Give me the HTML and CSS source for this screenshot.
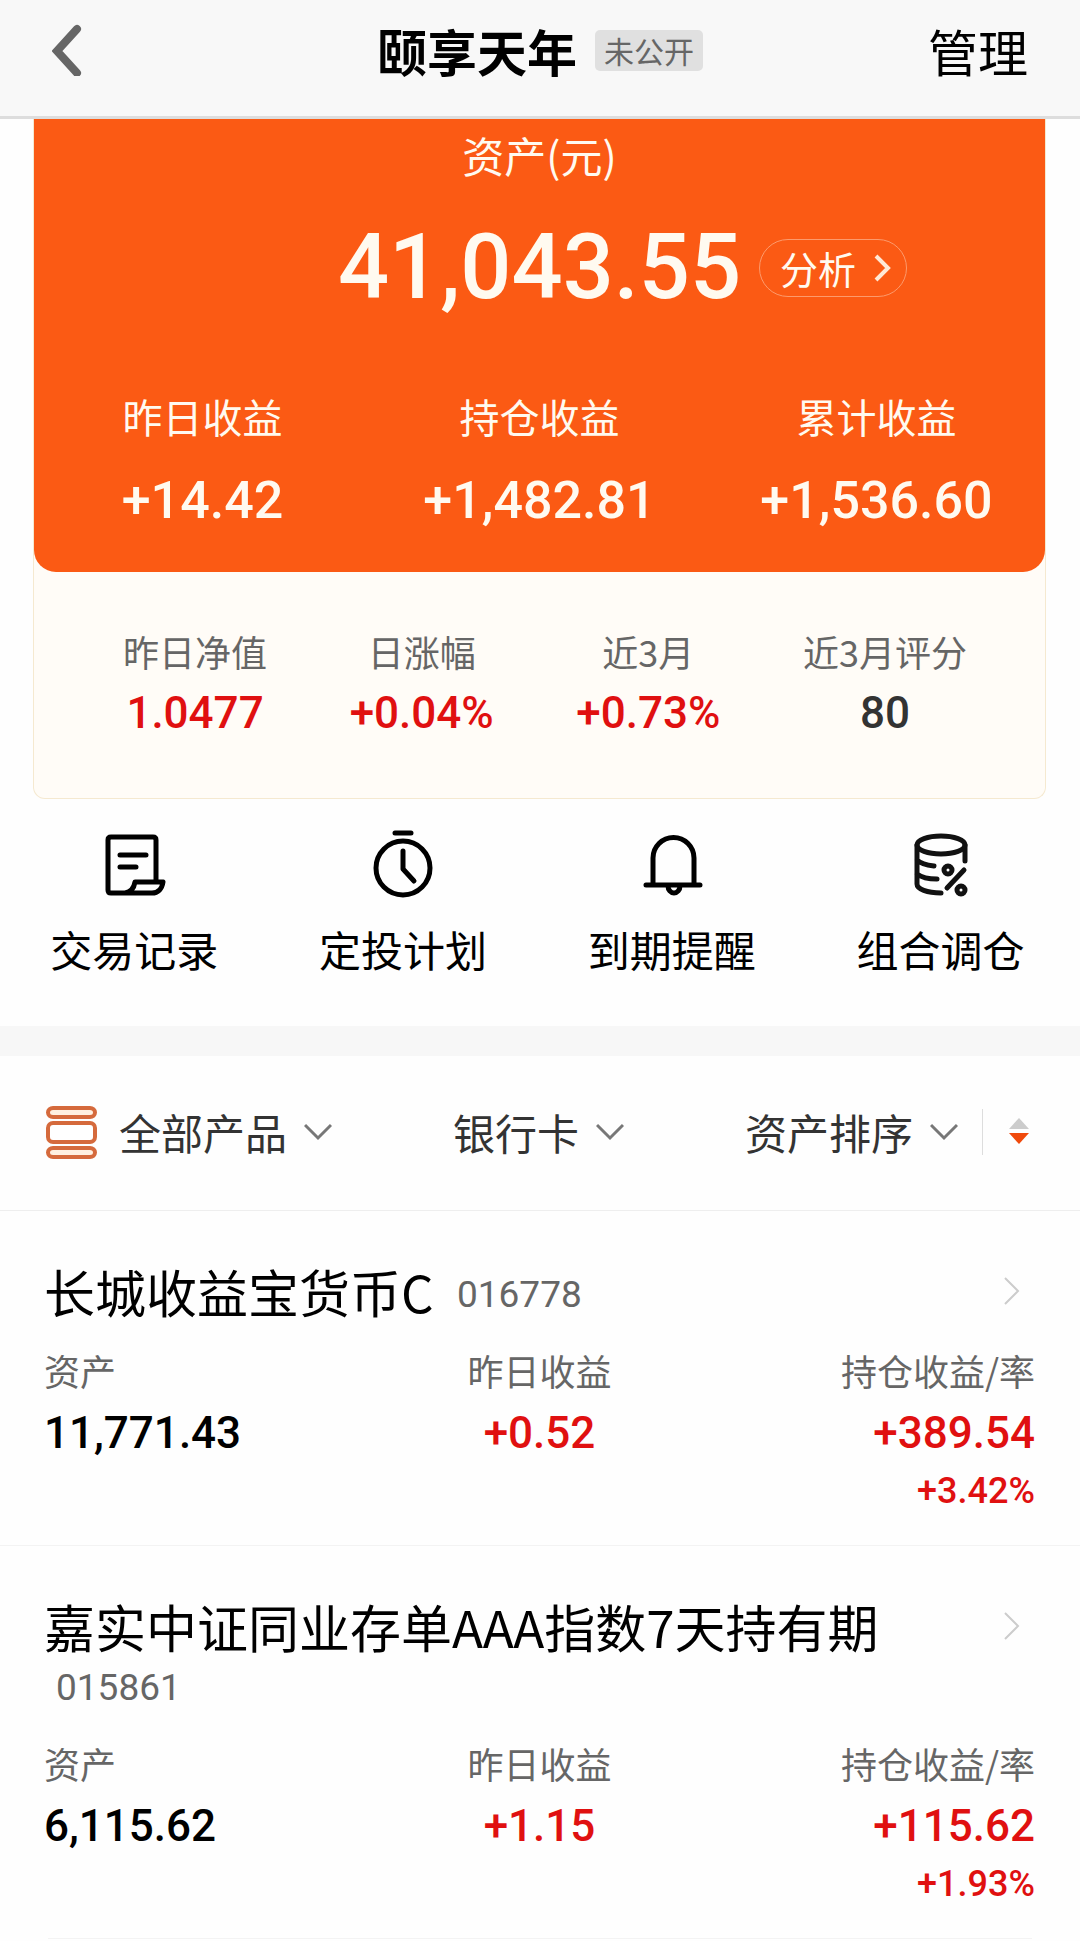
FILE: index.html
```html
<!DOCTYPE html>
<html lang="zh-CN">
<head>
<meta charset="utf-8">
<meta name="viewport" content="width=device-width, initial-scale=1">
<title>颐享天年</title>
<link rel="stylesheet" href="styles.css">
</head>
<body>
<header class="topbar">
  <button class="back" type="button" aria-label="返回">
    <svg width="30" height="52" viewBox="0 0 30 52"><path d="M25 5 5 27l20 22" fill="none" stroke="#666" stroke-width="8" stroke-linecap="round"/></svg>
  </button>
  <div class="heading"><h1>颐享天年</h1><span class="badge">未公开</span></div>
  <button class="manage" type="button">管理</button>
</header>

<main>
  <section class="card">
    <div class="assets">
      <p class="assets-label">资产(元)</p>
      <div class="total-row">
        <strong class="total">41,043.55</strong>
        <a class="analyse" href="#analysis">分析
          <svg width="18" height="28" viewBox="0 0 18 28"><path d="M2 2l12 12L2 26" fill="none" stroke="#ffe9d6" stroke-width="4"/></svg>
        </a>
      </div>
      <dl class="gains">
        <div><dt>昨日收益</dt><dd>+14.42</dd></div>
        <div><dt>持仓收益</dt><dd>+1,482.81</dd></div>
        <div><dt>累计收益</dt><dd>+1,536.60</dd></div>
      </dl>
    </div>
    <dl class="stats">
      <div><dt>昨日净值</dt><dd class="up">1.0477</dd></div>
      <div><dt>日涨幅</dt><dd class="up">+0.04%</dd></div>
      <div><dt>近3月</dt><dd class="up">+0.73%</dd></div>
      <div><dt>近3月评分</dt><dd>80</dd></div>
    </dl>
  </section>

  <nav class="actions">
    <a href="#records">
      <svg width="72" height="72" viewBox="0 0 72 72" fill="none" stroke="#000" stroke-width="5" stroke-linecap="round" stroke-linejoin="round"><path d="M58 55V13q0-3-3-3H13q-3 0-3 3v50q0 3 3 3h41c6 0 10-4 11-11H37c-1 6-4 10-10 11M22 28h26M22 40h16"/></svg>
      交易记录</a>
    <a href="#plan">
      <svg width="72" height="72" viewBox="0 0 72 72" fill="none" stroke="#000" stroke-width="5" stroke-linecap="round" stroke-linejoin="round"><circle cx="36" cy="41" r="27"/><path d="M28 6h16M36 24v18l11 12"/></svg>
      定投计划</a>
    <a href="#reminder">
      <svg width="72" height="72" viewBox="0 0 72 72" fill="none" stroke="#000" stroke-width="5" stroke-linecap="round" stroke-linejoin="round"><path d="M17 58V31a20 20 0 0 1 41 0v27M10 58h54M32 59a6 7 0 0 0 12 0"/></svg>
      到期提醒</a>
    <a href="#rebalance">
      <svg width="72" height="72" viewBox="0 0 72 72" fill="none" stroke="#111" stroke-width="5" stroke-linecap="round"><ellipse cx="36" cy="18" rx="24" ry="9"/><path d="M12 18v39c0 5 10 9 24 9M60 18v16M12 33c3 3 9 5 17 6M12 47c4 3 11 5 20 5M59 43 42 61"/><circle cx="43" cy="43" r="4"/><circle cx="56" cy="63" r="4"/></svg>
      组合调仓</a>
  </nav>

  <form class="filters">
    <svg class="list-icon" width="52" height="54" viewBox="0 0 52 54" fill="#fff0e0" stroke="#d56a3c" stroke-width="4"><rect x="3" y="3" width="47" height="9" rx="5"/><rect x="3" y="18" width="47" height="19" rx="5" fill="#fff"/><rect x="3" y="43" width="47" height="9" rx="5"/></svg>
    <label class="picker product"><select aria-label="产品"><option>全部产品</option></select><svg width="28" height="18" viewBox="0 0 28 18"><path d="M1 2l13 13L27 2" fill="none" stroke="#777" stroke-width="3"/></svg></label>
    <label class="picker bank"><select aria-label="付款方式"><option>银行卡</option></select><svg width="28" height="18" viewBox="0 0 28 18"><path d="M1 2l13 13L27 2" fill="none" stroke="#777" stroke-width="3"/></svg></label>
    <label class="picker order"><select aria-label="排序"><option>资产排序</option></select><svg width="28" height="18" viewBox="0 0 28 18"><path d="M1 2l13 13L27 2" fill="none" stroke="#777" stroke-width="3"/></svg></label>
    <button class="sort" type="button" aria-label="降序">
      <svg width="20" height="28" viewBox="0 0 20 28"><path d="M10 0l10 11H0z" fill="#ccc"/><path d="M0 15h20L10 26z" fill="#f04a0c"/></svg>
    </button>
  </form>

  <ul class="products">
    <li>
      <a class="product-head" href="#016778">
        <h2>长城收益宝货币C <span class="code">016778</span></h2>
        <svg width="18" height="30" viewBox="0 0 18 30"><path d="M2 2l13 13L2 28" fill="none" stroke="#ccc" stroke-width="2"/></svg>
      </a>
      <dl class="figures">
        <div><dt>资产</dt><dd>11,771.43</dd></div>
        <div><dt>昨日收益</dt><dd class="up">+0.52</dd></div>
        <div><dt>持仓收益/率</dt><dd class="up">+389.54</dd><dd class="rate up">+3.42%</dd></div>
      </dl>
    </li>
    <li>
      <a class="product-head" href="#015861">
        <h2>嘉实中证同业存单AAA指数7天持有期 <span class="code">015861</span></h2>
        <svg width="18" height="30" viewBox="0 0 18 30"><path d="M2 2l13 13L2 28" fill="none" stroke="#ccc" stroke-width="2"/></svg>
      </a>
      <dl class="figures">
        <div><dt>资产</dt><dd>6,115.62</dd></div>
        <div><dt>昨日收益</dt><dd class="up">+1.15</dd></div>
        <div><dt>持仓收益/率</dt><dd class="up">+115.62</dd><dd class="rate up">+1.93%</dd></div>
      </dl>
    </li>
  </ul>
</main>
</body>
</html>
```

FILE: styles.css
```css
* {
  box-sizing: border-box;
}

body,
h1,
h2,
p,
dl,
dd,
ul {
  margin: 0;
  padding: 0;
}

body {
  background: #fefefe;
  color: #000;
  font-family: "Noto Sans CJK SC", sans-serif;
}

a {
  color: inherit;
  text-decoration: none;
}

button {
  padding: 0;
  border: 0;
  background: none;
  color: inherit;
  font: inherit;
}

svg {
  display: block;
  flex: none;
}

dd,
.total,
.code {
  font-family: Roboto, "Noto Sans CJK SC", sans-serif;
  font-weight: 500;
}

.topbar {
  display: grid;
  grid-template-columns: 1fr auto 1fr;
  align-items: center;
  padding: 10px 52px 26px;
  border-bottom: 3px solid #ddd;
  background: #f8f8f8;
  font-size: 50px;
  line-height: 80px;
}

.back {
  justify-self: start;
}

.manage {
  justify-self: end;
}

.heading {
  display: flex;
  align-items: center;
  gap: 18px;
}

.heading h1 {
  font-size: 50px;
  font-weight: 700;
}

.badge {
  padding: 0 9px;
  border-radius: 5px;
  background: #e0e0e0;
  color: #666;
  font-size: 30px;
  line-height: 41px;
}

/* Asset summary */
.card {
  margin: 0 34px 0 33px;
  border: 1px solid #f5e9d0;
  border-top: 0;
  border-radius: 0 0 12px 12px;
  background: #fffcf7;
}

.assets {
  padding-bottom: 36px;
  border-radius: 0 0 22px 22px;
  background: #fb5a14;
  color: #fffaf0;
  text-align: center;
}

.assets-label {
  padding-top: 6px;
  font-size: 42px;
  line-height: 60px;
}

.total-row {
  display: grid;
  grid-template-columns: 1fr auto 1fr;
  align-items: center;
  gap: 18px;
  padding-top: 25px;
}

.total {
  grid-column: 2;
  font-size: 90px;
  line-height: 116px;
}

.analyse {
  display: flex;
  align-items: center;
  justify-self: start;
  gap: 18px;
  padding: 0 14px 0 20px;
  border: 1px solid #fd9a6c;
  border-radius: 29px;
  font-size: 38px;
  line-height: 56px;
}

.gains {
  display: grid;
  grid-template-columns: repeat(3, 1fr);
  padding-top: 60px;
}

.gains dt {
  font-size: 40px;
  line-height: 60px;
}

.gains dd {
  padding-top: 20px;
  font-size: 52px;
  line-height: 70px;
}

.stats {
  display: flex;
  justify-content: space-between;
  padding: 55px 78px 57px 89px;
  text-align: center;
}

.stats dt,
.figures dt {
  color: #666;
  font-size: 36px;
  line-height: 48px;
}

.stats dd {
  padding-top: 10px;
  color: #333;
  font-size: 44px;
  line-height: 56px;
}

.stats .up,
.figures .up {
  color: #e01010;
}

/* Shortcuts */
.actions {
  display: grid;
  grid-template-columns: repeat(4, 1fr);
  padding: 28px 5px 47px 0;
  border-bottom: 30px solid #f7f7f7;
}

.actions a {
  display: flex;
  flex-direction: column;
  align-items: center;
  gap: 20px;
  font-size: 42px;
  line-height: 60px;
}

/* Filter bar */
.filters {
  display: flex;
  align-items: center;
  padding: 46px 51px 48px 45px;
  border-bottom: 1px solid #eee;
}

.picker {
  display: flex;
  align-items: center;
  gap: 16px;
}

.picker select {
  appearance: none;
  padding: 0;
  border: 0;
  background: none;
  color: #333;
  font-family: inherit;
  font-size: 42px;
  line-height: 60px;
}

.product {
  margin-left: 22px;
}

.bank,
.order {
  margin-left: auto;
}

.sort {
  margin-left: 24px;
  padding: 9px 0 9px 26px;
  border-left: 1px solid #ddd;
}

/* Holdings */
.products {
  list-style: none;
}

.products li {
  padding: 51px 45px 30px 44px;
}

.products li + li {
  border-top: 1px solid #f3f3f3;
}

.products::after {
  content: "";
  display: block;
  height: 1px;
  margin: 0 48px;
  background: #f3f3f3;
}

.product-head {
  display: flex;
  justify-content: space-between;
  padding-right: 14px;
}

.product-head svg {
  margin-top: 14px;
}

.product-head h2 {
  font-size: 51px;
  font-weight: 400;
  line-height: 58px;
}

.code {
  display: inline-block;
  margin-left: 12px;
  color: #666;
  font-size: 37px;
  font-weight: 400;
  line-height: 38px;
  vertical-align: 6px;
}

.figures {
  display: grid;
  grid-template-columns: repeat(3, 1fr);
  padding-top: 26px;
  text-align: center;
}

.figures div:first-child {
  text-align: left;
}

.figures div:last-child {
  text-align: right;
}

.figures dd {
  padding-top: 11px;
  font-size: 44px;
  line-height: 56px;
}

.figures .rate {
  padding-top: 6px;
  font-size: 36px;
  line-height: 48px;
}
```
